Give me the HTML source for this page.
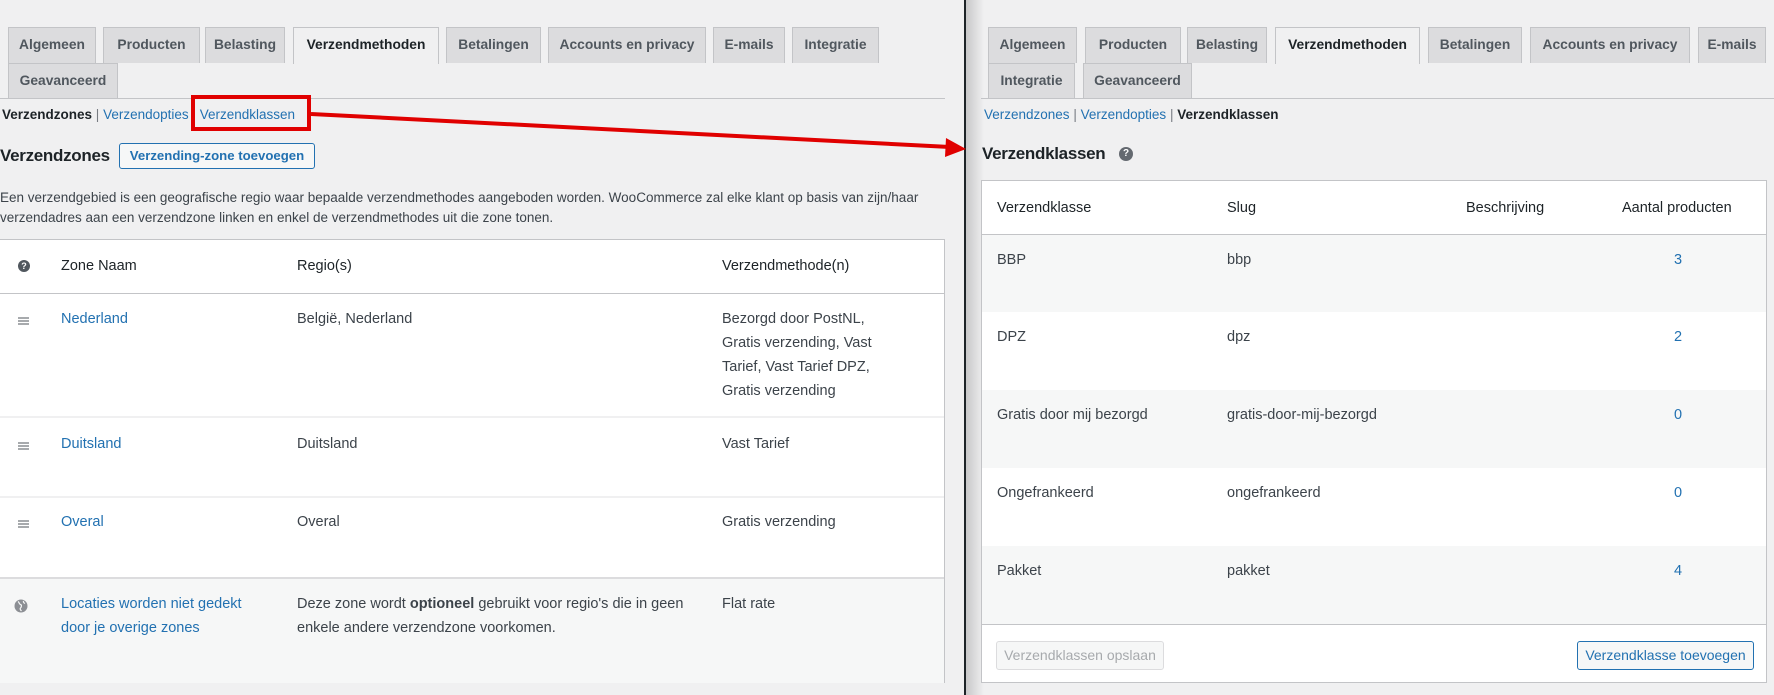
<!DOCTYPE html>
<html><head><meta charset="utf-8"><style>
*{box-sizing:border-box;margin:0;padding:0}
body{width:1774px;height:695px;overflow:hidden;background:#f0f0f1;font-family:"Liberation Sans",Arial,sans-serif;color:#1d2327;position:relative;font-size:14.5px}
.a{position:absolute;white-space:nowrap}
.tab{position:absolute;height:36px;background:#dcdcde;border:1px solid #c3c4c7;border-bottom:none;color:#50575e;font-weight:bold;font-size:13.8px;line-height:34px;text-align:center}
.tab.on{background:#f0f0f1;color:#1d2327;height:37px;z-index:2}
a,.lk{color:#2271b1;text-decoration:none}
.hl{position:absolute;height:1px;background:#c3c4c7}
.box{position:absolute;background:#fff;border:1px solid #c3c4c7}
.row{position:absolute;left:0;right:0}
.btn{position:absolute;border:1px solid #2271b1;color:#2271b1;background:#f6f7f7;border-radius:3px;font-size:14px;text-align:center}
.drag{position:absolute;width:11px;height:8px;border-top:2px solid #a7aaad;border-bottom:2px solid #a7aaad}
.drag:after{content:"";position:absolute;left:0;right:0;top:1px;height:2px;background:#a7aaad}
</style></head><body>
<!-- LEFT -->
<div class="tab" style="left:8px;top:27px;width:88px">Algemeen</div>
<div class="tab" style="left:103px;top:27px;width:97px">Producten</div>
<div class="tab" style="left:205px;top:27px;width:80px">Belasting</div>
<div class="tab on" style="left:293px;top:27px;width:146px">Verzendmethoden</div>
<div class="tab" style="left:446px;top:27px;width:95px">Betalingen</div>
<div class="tab" style="left:548px;top:27px;width:158px">Accounts en privacy</div>
<div class="tab" style="left:713px;top:27px;width:72px">E-mails</div>
<div class="tab" style="left:792px;top:27px;width:87px">Integratie</div>
<div class="tab" style="left:8px;top:63px;width:110px">Geavanceerd</div>
<div class="hl" style="left:0;top:98px;width:945px"></div>
<div class="a" style="left:2px;top:107px;font-size:13.5px"><b>Verzendzones</b> <span style="color:#787c82">|</span> <span class="lk">Verzendopties</span> <span style="color:#787c82">|</span> <span class="lk">Verzendklassen</span></div>
<div class="a" style="left:191px;top:95px;width:120px;height:36px;border:4px solid #e00000"></div>
<div class="a" style="left:0;top:146px;font-size:17px;font-weight:bold;letter-spacing:-0.3px">Verzendzones</div>
<div class="btn" style="left:119px;top:143px;width:196px;height:26px;line-height:24px;font-weight:bold;font-size:13.2px">Verzending-zone toevoegen</div>
<div class="a" style="left:0;top:188px;font-size:13.5px;line-height:20px;color:#3c434a">Een verzendgebied is een geografische regio waar bepaalde verzendmethodes aangeboden worden. WooCommerce zal elke klant op basis van zijn/haar<br>verzendadres aan een verzendzone linken en enkel de verzendmethodes uit die zone tonen.</div>
<div class="box" style="left:-1px;top:239px;width:946px;height:444px;font-size:14.5px;color:#3c434a">
 <div class="row" style="top:0;height:54px;border-bottom:1px solid #c3c4c7;color:#1d2327">
  <div class="a" style="left:18px;top:20px;width:12px;height:12px;border-radius:50%;background:#50575e;color:#fff;font-size:9px;line-height:12px;text-align:center;font-weight:bold">?</div>
  <div class="a" style="left:61px;top:18px">Zone Naam</div><div class="a" style="left:297px;top:18px">Regio(s)</div><div class="a" style="left:722px;top:18px">Verzendmethode(n)</div></div>
 <div class="row" style="top:54px;height:124px;border-bottom:2px solid #f0f0f1">
  <div class="drag" style="left:18px;top:23px"></div>
  <a class="a" style="left:61px;top:17px">Nederland</a><div class="a" style="left:297px;top:17px">België, Nederland</div>
  <div class="a" style="left:722px;top:13px;line-height:24px">Bezorgd door PostNL,<br>Gratis verzending, Vast<br>Tarief, Vast Tarief DPZ,<br>Gratis verzending</div></div>
 <div class="row" style="top:178px;height:80px;border-bottom:2px solid #f0f0f1">
  <div class="drag" style="left:18px;top:24px"></div>
  <a class="a" style="left:61px;top:18px">Duitsland</a><div class="a" style="left:297px;top:18px">Duitsland</div><div class="a" style="left:722px;top:18px">Vast Tarief</div></div>
 <div class="row" style="top:258px;height:80px">
  <div class="drag" style="left:18px;top:22px"></div>
  <a class="a" style="left:61px;top:16px">Overal</a><div class="a" style="left:297px;top:16px">Overal</div><div class="a" style="left:722px;top:16px">Gratis verzending</div></div>
 <div class="row" style="top:337px;height:106px;background:#f6f7f7;border-top:2px solid #dcdcde">
  <svg class="a" style="left:14px;top:20px" width="14" height="14" viewBox="0 0 14 14"><circle cx="7" cy="7" r="6.5" fill="#8c8f94"/><path d="M4 2.5c1.5 1 1 2.5 2.5 3s1 2.5 0 3.5 .5 2.5 1 3M9.5 2c-.5 1.5.5 2 1.5 2.5" stroke="#f6f7f7" stroke-width="1.2" fill="none"/></svg>
  <div class="a" style="left:61px;top:13px;line-height:24px;color:#2271b1">Locaties worden niet gedekt<br>door je overige zones</div>
  <div class="a" style="left:297px;top:13px;line-height:24px">Deze zone wordt <b>optioneel</b> gebruikt voor regio's die in geen<br>enkele andere verzendzone voorkomen.</div>
  <div class="a" style="left:722px;top:17px">Flat rate</div></div>
</div>
<!-- divider -->
<div class="a" style="left:964px;top:0;width:2px;height:695px;background:#1d2327"></div>
<div class="a" style="left:966px;top:0;width:18px;height:695px;background:linear-gradient(90deg,#c8c8c9,#f0f0f1)"></div>
<!-- RIGHT -->
<div class="tab" style="left:988px;top:27px;width:89px">Algemeen</div>
<div class="tab" style="left:1085px;top:27px;width:96px">Producten</div>
<div class="tab" style="left:1187px;top:27px;width:80px">Belasting</div>
<div class="tab on" style="left:1275px;top:27px;width:145px">Verzendmethoden</div>
<div class="tab" style="left:1428px;top:27px;width:94px">Betalingen</div>
<div class="tab" style="left:1530px;top:27px;width:160px">Accounts en privacy</div>
<div class="tab" style="left:1698px;top:27px;width:68px">E-mails</div>
<div class="tab" style="left:988px;top:63px;width:87px">Integratie</div>
<div class="tab" style="left:1083px;top:63px;width:109px">Geavanceerd</div>
<div class="hl" style="left:981px;top:98px;width:793px"></div>
<div class="a" style="left:984px;top:107px;font-size:13.5px"><span class="lk">Verzendzones</span> <span style="color:#787c82">|</span> <span class="lk">Verzendopties</span> <span style="color:#787c82">|</span> <b>Verzendklassen</b></div>
<div class="a" style="left:982px;top:144px;font-size:17px;font-weight:bold;letter-spacing:-0.3px">Verzendklassen</div>
<div class="a" style="left:1119px;top:147px;width:14px;height:14px;border-radius:50%;background:#646970;color:#fff;font-size:10px;line-height:14px;text-align:center;font-weight:bold">?</div>
<div class="box" style="left:981px;top:180px;width:786px;height:503px;font-size:14.5px;color:#3c434a">
 <div class="row" style="top:0;height:54px;border-bottom:1px solid #c3c4c7;color:#1d2327">
  <div class="a" style="left:15px;top:19px">Verzendklasse</div><div class="a" style="left:245px;top:19px">Slug</div><div class="a" style="left:484px;top:19px">Beschrijving</div><div class="a" style="left:640px;top:19px">Aantal producten</div></div>
 <div class="row" style="top:54px;height:77px;background:#f6f7f7"><div class="a" style="left:15px;top:17px">BBP</div><div class="a" style="left:245px;top:17px">bbp</div><a class="a" style="left:692px;top:17px">3</a></div>
 <div class="row" style="top:131px;height:78px"><div class="a" style="left:15px;top:17px">DPZ</div><div class="a" style="left:245px;top:17px">dpz</div><a class="a" style="left:692px;top:17px">2</a></div>
 <div class="row" style="top:209px;height:78px;background:#f6f7f7"><div class="a" style="left:15px;top:17px">Gratis door mij bezorgd</div><div class="a" style="left:245px;top:17px">gratis-door-mij-bezorgd</div><a class="a" style="left:692px;top:17px">0</a></div>
 <div class="row" style="top:287px;height:78px"><div class="a" style="left:15px;top:17px">Ongefrankeerd</div><div class="a" style="left:245px;top:17px">ongefrankeerd</div><a class="a" style="left:692px;top:17px">0</a></div>
 <div class="row" style="top:365px;height:78px;background:#f6f7f7"><div class="a" style="left:15px;top:17px">Pakket</div><div class="a" style="left:245px;top:17px">pakket</div><a class="a" style="left:692px;top:17px">4</a></div>
 <div class="row" style="top:443px;height:59px;border-top:1px solid #c3c4c7">
  <div class="btn" style="left:14px;top:16px;width:168px;height:29px;line-height:27px;border-color:#dcdcde;color:#a7aaad">Verzendklassen opslaan</div>
  <div class="btn" style="left:595px;top:16px;width:177px;height:29px;line-height:27px">Verzendklasse toevoegen</div></div>
</div>
<!-- arrow -->
<svg class="a" style="left:0;top:0" width="1774" height="695"><line x1="311" y1="114" x2="950" y2="147" stroke="#e00000" stroke-width="4"/><polygon points="966,149 946,138 945,157" fill="#e00000"/></svg>
</body></html>
